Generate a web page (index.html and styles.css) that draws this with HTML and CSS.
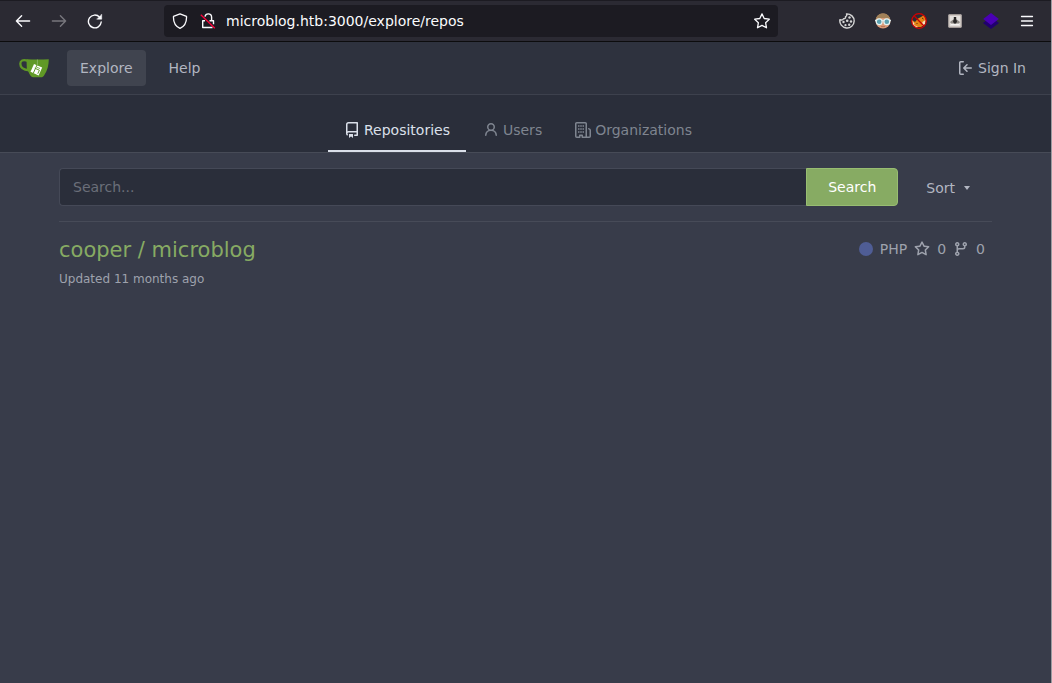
FILE: index.html
```html
<!DOCTYPE html>
<html lang="en">
<head>
<meta charset="utf-8">
<meta name="viewport" content="width=device-width, initial-scale=1">
<title>Explore - Gitea</title>
<link rel="stylesheet" href="styles.css">
</head>
<body>
<div class="window">
  <div class="toolbar">
    <div class="history">
      <button class="tool" type="button" aria-label="Back"><svg width="16" height="16" viewBox="0 0 16 16" fill="none" stroke="currentColor" stroke-width="1.4" stroke-linecap="round" stroke-linejoin="round"><path d="M14.6 8H1.4M6.6 2.8 1.4 8l5.2 5.2"/></svg></button>
      <button class="tool tool-off" type="button" aria-label="Forward" disabled><svg width="16" height="16" viewBox="0 0 16 16" fill="none" stroke="currentColor" stroke-width="1.4" stroke-linecap="round" stroke-linejoin="round"><path d="M1.4 8h13.2M9.4 2.8 14.6 8l-5.2 5.2"/></svg></button>
      <button class="tool" type="button" aria-label="Reload"><svg width="16" height="16" viewBox="0 0 16 16" fill="none" stroke="currentColor" stroke-width="1.4" stroke-linecap="round"><path d="M14.200 9A6.400 6.400 0 1 1 12.600 4.200"/><path d="M14.700 1.500v4.700H10z" fill="currentColor" stroke-width=".5" stroke-linejoin="round"/></svg></button>
    </div>
    <div class="address">
      <svg class="address-icon" width="16" height="16" viewBox="0 0 16 16" fill="none" stroke="currentColor" stroke-width="1.3" stroke-linejoin="round"><path d="M8 .8 14.500 3.400c.3 5.600-1.700 9.800-6.500 12C3.200 13.200 1.200 9 1.500 3.400z"/></svg>
      <svg class="address-icon" width="16" height="16" viewBox="0 0 16 16" fill="none" stroke="currentColor" stroke-width="1.4" stroke-linejoin="round"><path d="M5 3.600C5.400 1.800 6.600.9 8.200.9c2 0 3.400 1.400 3.400 3.300v3.600"/><path d="M5 7.800H2.700v6.700h9.800M9.500 7.800h4v3.500"/><path d="M.8 1.800 14.800 15.300" stroke="#ff0039" stroke-width="1.300"/></svg>
      <input class="address-input" type="text" aria-label="Address" value="microblog.htb:3000/explore/repos">
      <button class="bookmark" type="button" aria-label="Bookmark this page"><svg width="16" height="16" viewBox="0 0 16 16" fill="none" stroke="currentColor" stroke-width="1.300" stroke-linejoin="round"><path d="m8 .9 2.200 4.600 5.100.7-3.700 3.500.9 5.100L8 12.400l-4.500 2.400.9-5.100L.7 6.200l5.100-.7z"/></svg></button>
    </div>
    <div class="extensions">
      <button class="tool" type="button" aria-label="Cookies"><svg width="16" height="16" viewBox="0 0 16 16"><path d="M7.500.9C11.800.7 15.200 4 15.200 8A7.200 7.200 0 1 1 .9 6.600c1.500.7 3 .4 3.600-.8C6 5.900 6.700 5 6.500 3.700 7.600 3.200 8 2 7.500.9z" fill="none" stroke="#d6d6d6" stroke-width="1.400" stroke-linejoin="round"/><g fill="#d6d6d6"><circle cx="10.500" cy="4.500" r="1.200"/><circle cx="8.200" cy="7.800" r="1.300"/><circle cx="4.500" cy="9" r="1.200"/><circle cx="12" cy="8.500" r="1.200"/><circle cx="6.500" cy="12.200" r="1.100"/><circle cx="10.200" cy="11.700" r="1.200"/></g></svg></button>
      <button class="tool" type="button" aria-label="Profile"><svg width="16" height="16" viewBox="0 0 16 16"><circle cx="8" cy="8" r="7.500" fill="#d99a78"/><path d="M.8 6C1.500 2.400 4.500.4 8 .4s6.500 2 7.200 5.600C12 4.700 4 4.700.8 6z" fill="#a08058"/><path d="M0 7.500h16" stroke="#d9e7e8" stroke-width="1.500"/><g fill="#5ba0af" stroke="#e3f2f2" stroke-width="1.200"><circle cx="4.200" cy="8.700" r="2.900"/><circle cx="11.800" cy="8.700" r="2.900"/></g><path d="M6 13.500h4" stroke="#b87558"/></svg></button>
      <button class="tool" type="button" aria-label="Proxy"><svg width="16" height="16" viewBox="0 0 16 16"><path d="M1 7l3 2 3-3.500 3-1.500 3-2 2 5-1 4-4 3H5l-4-3z" fill="#e28415"/><path d="m1 7.500 2.500 3L3 12l4 2-2 1-3-2.500zM11.500 9l3-2-.5 4-3 2z" fill="#f5dfbf"/><circle cx="8" cy="8" r="7.300" fill="none" stroke="#d70000" stroke-width="1.200"/><path d="m3 2.800 10.200 10.400" stroke="#c60000" stroke-width="1.300"/><path d="m11 5 1.500 1M5.500 10l1 1" stroke="#642a08"/></svg></button>
      <button class="tool" type="button" aria-label="Inspector"><svg width="16" height="16" viewBox="0 0 16 16"><path d="M1.500 1.500h13v13h-13z" fill="#e5e1df"/><path d="M2 2h12v12H2z" fill="none" stroke="#b7aca6"/><path d="M3 9q5-5.500 10 0l-1 1.500H4z" fill="#8d8985"/><path d="M6.800 4h2.400v2l.8 2.500L9 10.500H7L6 8.500 6.800 6z" fill="#292727"/><path d="M4 11.500h8" stroke="#f5f3f2"/></svg></button>
      <button class="tool" type="button" aria-label="Layers"><svg width="16" height="16" viewBox="0 0 16 16"><path d="m0 10 8-6 8 6-8 6z" fill="#21006f"/><path d="m.2 6 7.800-6 7.800 6L8 12z" fill="#4a00b4"/></svg></button>
      <button class="tool" type="button" aria-label="Open menu"><svg width="16" height="16" viewBox="0 0 16 16" stroke="currentColor" stroke-width="1.300" stroke-linecap="round"><path d="M2.500 3.500h11M2.500 8h11M2.500 12.500h11"/></svg></button>
    </div>
  </div>

  <nav class="navbar" aria-label="Main">
    <a class="brand" href="#" aria-label="Home"><svg width="30" height="30" viewBox="0 0 30 30"><path d="M9 7.800C3.700 6.300 1.300 7.600 1.300 10.800c0 3.900 3 6.100 9 6.500" fill="none" stroke="#609926" stroke-width="2.300"/><path d="M7.500 6.200c7.500.5 15 .5 22.300 0-.1 6-1.300 11.200-4.600 16-1 1.500-1.600 2-3.200 2h-7.800c-1.700 0-2.700-1.200-3.700-3.200L7.800 15.500z" fill="#609926"/><path d="m15 11 8.200 3.500-3.600 7.900-8.100-3.700z" fill="#fff"/><path d="M18.400 6.500v6" stroke="#91b970" stroke-width=".8"/><path d="m18 12-3.600 8M15.800 15.200l4.600 2-1.600 3.500" fill="none" stroke="#609926" stroke-width="1"/><path d="m18 14.300 3 1.300" stroke="#609926" stroke-width=".7"/></svg></a>
    <a class="nav-item nav-active" href="#">Explore</a>
    <a class="nav-item" href="#">Help</a>
    <a class="nav-item sign-in" href="#"><svg class="icon" width="16" height="16" viewBox="0 0 16 16"><path d="M2 2.750C2 1.784 2.784 1 3.750 1h2.500a.75.75 0 0 1 0 1.500h-2.500a.25.25 0 0 0-.25.25v10.500c0 .138.112.25.250.25h2.500a.75.75 0 0 1 0 1.500h-2.500A1.750 1.750 0 0 1 2 13.250Zm6.560 4.500h5.690a.75.75 0 0 1 0 1.500H8.560l1.970 1.970a.75.75 0 1 1-1.060 1.060L6.220 8.530a.75.75 0 0 1 0-1.060l3.250-3.250a.75.75 0 1 1 1.060 1.060Z"/></svg>Sign In</a>
  </nav>

  <nav class="tabs" aria-label="Explore">
    <a class="tab tab-active" href="#" aria-current="page"><svg class="icon" width="16" height="16" viewBox="0 0 16 16"><path d="M2 2.500A2.500 2.500 0 0 1 4.500 0h8.750a.75.75 0 0 1 .75.75v12.500a.75.75 0 0 1-.75.75h-2.500a.75.75 0 0 1 0-1.500h1.750v-2h-8a1 1 0 0 0-.714 1.700.75.75 0 1 1-1.072 1.050A2.495 2.495 0 0 1 2 11.500Zm10.500-1h-8a1 1 0 0 0-1 1v6.708A2.486 2.486 0 0 1 4.500 9h8ZM5 12.250a.25.25 0 0 1 .25-.25h3.500a.25.25 0 0 1 .25.25v3.250a.25.25 0 0 1-.4.200l-1.450-1.087a.249.249 0 0 0-.300 0L5.400 15.700a.25.25 0 0 1-.4-.200Z"/></svg>Repositories</a>
    <a class="tab" href="#"><svg class="icon" width="16" height="16" viewBox="0 0 16 16"><path d="M10.561 8.073a6 6 0 0 1 3.432 5.142.75.75 0 1 1-1.498.070 4.500 4.500 0 0 0-8.990 0 .75.75 0 0 1-1.498-.070 6 6 0 0 1 3.431-5.142 3.999 3.999 0 1 1 5.123 0ZM10.500 5a2.500 2.500 0 1 0-5 0 2.500 2.500 0 0 0 5 0Z"/></svg>Users</a>
    <a class="tab" href="#"><svg class="icon" width="16" height="16" viewBox="0 0 16 16"><path d="M1.750 16A1.750 1.750 0 0 1 0 14.250V1.750C0 .784.784 0 1.750 0h8.500C11.216 0 12 .784 12 1.750v12.500c0 .085-.006.168-.018.250h2.268a.25.25 0 0 0 .25-.25V8.285a.25.25 0 0 0-.111-.208l-1.055-.703a.749.749 0 1 1 .832-1.248l1.055.703c.487.325.779.871.779 1.456v5.965A1.750 1.750 0 0 1 14.250 16h-3.500a.766.766 0 0 1-.197-.026c-.099.017-.200.026-.303.026h-3a.75.75 0 0 1-.75-.75V14h-1v1.250a.75.75 0 0 1-.75.75Zm-.25-1.750c0 .138.112.25.250.25H4v-1.250a.75.75 0 0 1 .75-.75h2.500a.75.75 0 0 1 .75.75v1.250h2.250a.25.25 0 0 0 .25-.25V1.750a.25.25 0 0 0-.25-.25h-8.500a.25.25 0 0 0-.25.25ZM3 3.250h1.500v1.500H3zM5.250 3.250h1.500v1.500h-1.500zM7.500 3.250H9v1.500H7.500zM3 6.250h1.500v1.500H3zM5.250 6.250h1.500v1.500h-1.500zM7.500 6.250H9v1.500H7.500zM3 9.250h1.500v1.500H3zM5.250 9.250h1.500v1.500h-1.500zM7.500 9.250H9v1.500H7.500z"/></svg>Organizations</a>
  </nav>

  <main class="content">
    <div class="search-row">
      <form class="search" role="search">
        <input class="search-input" type="search" placeholder="Search..." aria-label="Search repositories">
        <button class="search-button" type="button">Search</button>
      </form>
      <button class="sort" type="button">Sort<svg width="8" height="4" viewBox="0 0 8 4"><path d="M1 0h6L4 4z" fill="currentColor"/></svg></button>
    </div>
    <article class="repo">
      <div class="repo-head">
        <h1 class="repo-name"><a href="#">cooper / microblog</a></h1>
        <div class="stats">
          <span class="stat"><span class="language-dot"></span>PHP</span>
          <span class="stat"><svg class="icon" width="16" height="16" viewBox="0 0 16 16"><path d="M8 .25a.75.75 0 0 1 .673.418l1.882 3.815 4.210.612a.75.75 0 0 1 .416 1.279l-3.046 2.970.719 4.192a.751.751 0 0 1-1.088.791L8 12.347l-3.766 1.980a.75.75 0 0 1-1.088-.790l.720-4.194L.818 6.374a.75.75 0 0 1 .416-1.280l4.210-.611L7.327.668A.75.75 0 0 1 8 .25Zm0 2.445L6.615 5.500a.75.75 0 0 1-.564.410l-3.097.450 2.240 2.184a.75.75 0 0 1 .216.664l-.528 3.084 2.769-1.456a.75.75 0 0 1 .698 0l2.770 1.456-.530-3.084a.75.75 0 0 1 .216-.664l2.240-2.183-3.096-.450a.75.75 0 0 1-.564-.410Z"/></svg>0</span>
          <span class="stat"><svg class="icon" width="16" height="16" viewBox="0 0 16 16"><path d="M9.500 3.250a2.250 2.250 0 1 1 3 2.122V6A2.500 2.500 0 0 1 10 8.500H6a1 1 0 0 0-1 1v1.128a2.251 2.251 0 1 1-1.500 0V5.372a2.250 2.250 0 1 1 1.500 0v1.836A2.493 2.493 0 0 1 6 7h4a1 1 0 0 0 1-1v-.628A2.250 2.250 0 0 1 9.500 3.250Zm-6 0a.75.75 0 1 0 1.500 0 .75.75 0 0 0-1.500 0Zm8.250-.75a.75.75 0 1 0 0 1.500.75.75 0 0 0 0-1.500ZM4.250 12a.75.75 0 1 0 0 1.500.75.75 0 0 0 0-1.500Z"/></svg>0</span>
        </div>
      </div>
      <p class="updated">Updated 11 months ago</p>
    </article>
  </main>
</div>
</body>
</html>
```
FILE: styles.css
```css
* {
  box-sizing: border-box;
}

body {
  margin: 0;
  background: #383c4a;
  color: #9ea2ad;
  font-family: "DejaVu Sans", sans-serif;
  font-size: 14px;
  line-height: 20px;
}

a {
  color: inherit;
  text-decoration: none;
}

button,
input {
  margin: 0;
  padding: 0;
  border: 0;
  background: none;
  color: inherit;
  font: inherit;
}

svg {
  display: block;
  flex: none;
}

.window {
  min-height: 100vh;
  border-right: 1px solid #9b9ba0;
}

.icon {
  fill: currentColor;
}

.toolbar {
  display: flex;
  align-items: center;
  height: 42px;
  padding: 0 6px 0 5px;
  border-top: 1px solid #1c1b22;
  border-bottom: 1px solid #0c0c0d;
  background: #2b2a33;
  color: #fbfbfe;
}

.history,
.extensions {
  display: flex;
}

.tool {
  display: grid;
  place-items: center;
  width: 36px;
  height: 32px;
}

.tool-off {
  color: #78777d;
}

.address {
  display: flex;
  flex: 1;
  align-items: center;
  gap: 12px;
  height: 32px;
  margin: 0 51px;
  padding: 0 8px;
  border-radius: 4px;
  background: #1c1b22;
}

.address-input {
  flex: 1;
  min-width: 0;
  margin-left: -2px;
  font-size: 14px;
  outline: 0;
}

.navbar {
  display: flex;
  align-items: center;
  height: 53px;
  padding: 0 12px 0 19px;
  border-bottom: 1px solid #3d414d;
  background: #2e323e;
  color: #b2b6c1;
}

.brand {
  margin-right: 18px;
}

.nav-item {
  display: flex;
  align-items: center;
  gap: 5px;
  height: 36px;
  margin-right: 10px;
  padding: 0 13px;
  border-radius: 4px;
}

.nav-active {
  background: #40444f;
}

.sign-in {
  margin-right: 0;
  margin-left: auto;
}

.tabs {
  display: flex;
  justify-content: center;
  gap: 1px;
  padding: 15px 15px 0 0;
  border-bottom: 1px solid #474b57;
  background: #2a2e3a;
  color: #7f8590;
}

.tab {
  display: flex;
  align-items: center;
  gap: 4px;
  height: 42px;
  padding: 0 16px;
  border-bottom: 2px solid transparent;
}

.tab-active {
  border-color: #dbe0ea;
  color: #dbe0ea;
}

.content {
  padding: 15px 59px;
}

.search-row {
  display: flex;
  align-items: center;
  gap: 28px;
  padding: 0 21px 15px 0;
  border-bottom: 1px solid #474b58;
}

.search {
  display: flex;
  flex: 1;
  height: 38px;
}

.search-input {
  flex: 1;
  min-width: 0;
  padding: 0 13px;
  border: 1px solid #454957;
  border-right: 0;
  border-radius: 4px 0 0 4px;
  background: #2a2e3a;
  outline: 0;
}

.search-input::placeholder {
  color: #6a6e79;
  opacity: 1;
}

.search-button {
  width: 92px;
  border: 1px solid #98bd72;
  border-radius: 0 4px 4px 0;
  background: #87ab63;
  color: #fff;
}

.sort {
  display: flex;
  align-items: center;
  gap: 8px;
  padding-top: 2px;
  color: #b2b6c1;
}

.repo {
  padding-top: 14px;
}

.repo-head {
  display: flex;
  align-items: center;
  justify-content: space-between;
  padding-right: 7px;
}

.repo-name {
  margin: 0;
  color: #87ab63;
  font-size: 21px;
  font-weight: 400;
  line-height: 28px;
}

.stats {
  display: flex;
  gap: 7px;
  padding-bottom: 2px;
}

.stat {
  display: flex;
  align-items: center;
  gap: 7px;
}

.language-dot {
  width: 14px;
  height: 14px;
  border-radius: 50%;
  background: #4f5d95;
}

.updated {
  margin: 5px 0 0;
  font-size: 12px;
}
```
